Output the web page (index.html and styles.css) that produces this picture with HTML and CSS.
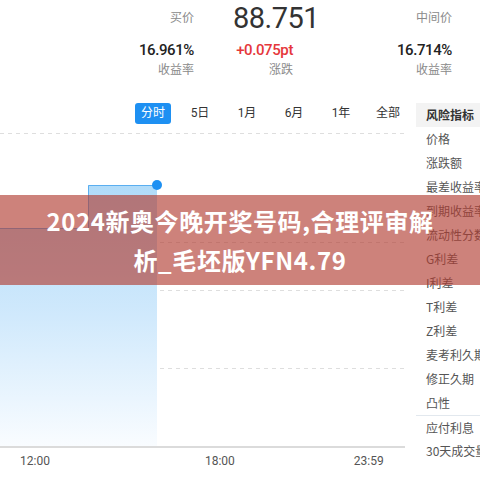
FILE: index.html
```html
<!DOCTYPE html>
<html lang="zh-CN">
<head>
    <meta charset="UTF-8">
    <meta name="viewport" content="width=device-width, initial-scale=1.0">
    <title>风险指标</title>
    <link rel="stylesheet" href="styles.css">
</head>
<body>
    <div class="page">
        <div class="quote">
            <div class="q-label">买价</div>
            <div class="q-price">88.751</div>
            <div class="q-label">中间价</div>

            <div class="q-value">16.961%</div>
            <div class="q-value q-mid up">+0.075pt</div>
            <div class="q-value">16.714%</div>

            <div class="q-label small">收益率</div>
            <div class="q-label small q-mid">涨跌</div>
            <div class="q-label small">收益率</div>
        </div>

        <div class="main">
            <div class="chart">
                <div class="tabs">
                    <span class="tab active">分时</span>
                    <span class="tab">5日</span>
                    <span class="tab">1月</span>
                    <span class="tab">6月</span>
                    <span class="tab">1年</span>
                    <span class="tab">全部</span>
                </div>

                <svg class="plot" width="416" height="316" viewBox="0 0 416 316">
                    <defs>
                        <linearGradient id="fill" x1="0" y1="52" x2="0" y2="313" gradientUnits="userSpaceOnUse">
                            <stop offset="0" stop-color="#b0dbf9"/>
                            <stop offset="0.5" stop-color="#d0e9fc"/>
                            <stop offset="1" stop-color="#f9fcff"/>
                        </linearGradient>
                    </defs>
                    <line class="grid" x1="0" y1="0.5" x2="405" y2="0.5"/>
                    <line class="grid" x1="0" y1="109.5" x2="405" y2="109.5"/>
                    <line class="grid" x1="0" y1="157.5" x2="405" y2="157.5"/>
                    <line class="grid" x1="0" y1="235.5" x2="405" y2="235.5"/>
                    <polygon points="0,95 88,95 88,52 157,52 157,313 0,313" fill="url(#fill)"/>
                    <polyline class="price-line" points="0,95.5 88.5,95.5 88.5,52.5 157,52.5"/>
                    <circle cx="157" cy="52" r="5" fill="#1e90f2"/>
                    <line class="axis" x1="0" y1="314" x2="405" y2="314"/>
                </svg>

                <div class="times">
                    <span class="t1">12:00</span>
                    <span class="t2">18:00</span>
                    <span class="t3">23:59</span>
                </div>
            </div>

            <div class="panel">
                <div class="panel-head">风险指标</div>
                <div class="item">价格</div>
                <div class="item">涨跌额</div>
                <div class="item">最差收益率</div>
                <div class="item">到期收益率</div>
                <div class="item">流动性分数</div>
                <div class="item">G利差</div>
                <div class="item">I利差</div>
                <div class="item">T利差</div>
                <div class="item">Z利差</div>
                <div class="item">麦考利久期</div>
                <div class="item">修正久期</div>
                <div class="item">凸性</div>
                <div class="item split">应付利息</div>
                <div class="item">30天成交量</div>
            </div>
        </div>

        <div class="banner">
            <p>2024新奥今晚开奖号码,合理评审解<br>析_毛坯版YFN4.79</p>
        </div>
    </div>
</body>
</html>
```

FILE: styles.css
```css
* {
    margin: 0;
    padding: 0;
    box-sizing: border-box;
}

body {
    font-family: Roboto, "Noto Sans CJK SC", sans-serif;
    background: white;
    color: #333;
}

.page {
    position: relative;
    width: 480px;
    height: 480px;
    overflow: hidden;
}

.quote {
    display: grid;
    grid-template-columns: 194px 126px 132px;
    grid-template-rows: 36px 28px 12px;
    height: 100px;
    text-align: right;
}

.q-label {
    font-size: 12px;
    line-height: 36px;
    color: #8a8a8a;
}

.q-label.small {
    line-height: 12px;
}

.q-price {
    font-size: 29px;
    line-height: 36px;
    color: #333;
    text-align: left;
    padding-left: 39px;
    letter-spacing: -0.5px;
}

.q-value {
    font-size: 15px;
    font-weight: 500;
    line-height: 28px;
    color: #222;
    letter-spacing: -0.4px;
}

.q-mid {
    padding-right: 27px;
}

.up {
    color: #e5373b;
}

.main {
    display: flex;
}

.chart {
    width: 416px;
}

.tabs {
    display: flex;
    gap: 11px;
    height: 33px;
    padding: 3px 0 0 135px;
}

.tab {
    width: 36px;
    height: 21px;
    line-height: 21px;
    text-align: center;
    font-size: 12px;
    color: #333;
    border-radius: 3px;
}

.tab.active {
    background: #1e90f2;
    color: white;
}

.plot {
    display: block;
}

.grid {
    stroke: #dedede;
    stroke-width: 1;
    stroke-dasharray: 4 4;
}

.price-line {
    fill: none;
    stroke: #5aaef0;
    stroke-width: 1;
}

.axis {
    stroke: #cfcfcf;
    stroke-width: 1.5;
}

.times {
    display: flex;
    font-size: 12px;
    color: #555;
    margin-top: 5px;
}

.t1 {
    margin-left: 20px;
}

.t2 {
    margin-left: 155px;
}

.t3 {
    margin-left: 119px;
}

.panel {
    width: 64px;
    margin-top: 3px;
    font-family: "Noto Sans CJK SC", sans-serif;
    font-size: 12px;
    white-space: nowrap;
    overflow: hidden;
}

.panel-head {
    height: 24px;
    line-height: 24px;
    padding-left: 10px;
    background: #f3f3f3;
    font-weight: 700;
    color: #333;
}

.item {
    height: 24px;
    line-height: 24px;
    padding-left: 10px;
    color: #555;
}

.item.split {
    border-top: 1px solid #e2e8ee;
}

.banner {
    position: absolute;
    left: 0;
    top: 195px;
    width: 480px;
    height: 90px;
    background: rgba(176, 60, 48, 0.64);
    display: flex;
    align-items: center;
    justify-content: center;
}

.banner p {
    font-family: "Noto Sans CJK SC", sans-serif;
    font-size: 24px;
    font-weight: 700;
    line-height: 39px;
    letter-spacing: 0.6px;
    color: white;
    text-align: center;
}
```
